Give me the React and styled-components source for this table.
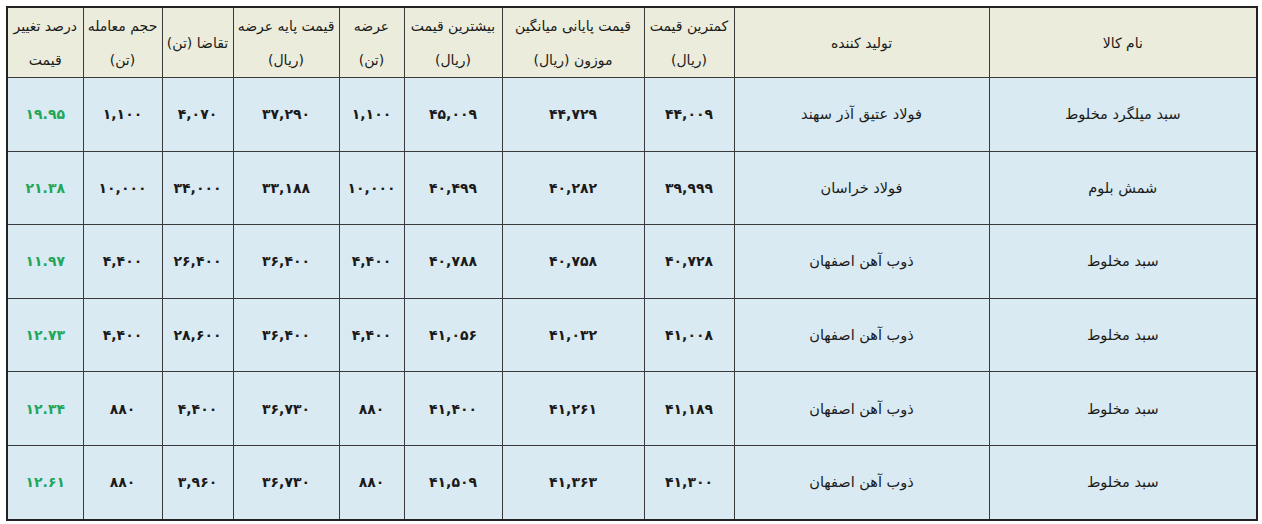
import styled, { createGlobalStyle } from 'styled-components';

const GlobalStyle = createGlobalStyle`
  html, body {
    margin: 0;
    padding: 0;
    background: #ffffff;
  }
  body {
    font-family: "DejaVu Sans", "Noto Sans", sans-serif;
    color: #1a1a1a;
  }
`;

const Page = styled.div`
  padding: 6px 6px 0 6px;
`;

const Table = styled.table`
  width: 1250px;
  border-collapse: collapse;
  table-layout: fixed;
  border: 2px solid #222;
`;

const HeadCell = styled.th`
  background: #ebecdb;
  border: 1px solid #3a3a3a;
  height: 69px;
  padding: 0 2px;
  font-weight: normal;
  font-size: 14px;
  line-height: 34px;
  text-align: center;
  vertical-align: middle;
  white-space: nowrap;
`;

const Cell = styled.td`
  background: #daeaf2;
  border: 1px solid #3a3a3a;
  height: 72.6px;
  padding: 0;
  text-align: center;
  vertical-align: middle;
  font-size: ${(p) => (p.$num ? '14px' : '14.5px')};
  font-weight: ${(p) => (p.$num ? 'bold' : 'normal')};
  color: ${(p) => (p.$green ? '#22a65c' : '#1a1a1a')};
  white-space: nowrap;
`;

const Num = styled.span`
  direction: ltr;
  unicode-bidi: isolate;
`;

// widths from right to left (table is rtl)
const widths = [268, 255, 90, 142, 98, 65, 106, 71, 79, 76];

const headers = [
  ['نام کالا'],
  ['تولید کننده'],
  ['کمترین قیمت', '(ریال)'],
  ['قیمت پایانی میانگین', 'موزون (ریال)'],
  ['بیشترین قیمت', '(ریال)'],
  ['عرضه', '(تن)'],
  ['قیمت پایه عرضه', '(ریال)'],
  ['تقاضا (تن)'],
  ['حجم معامله', '(تن)'],
  ['درصد تغییر', 'قیمت'],
];

const rows = [
  ['سبد میلگرد مخلوط', 'فولاد عتیق آذر سهند', '۴۴,۰۰۹', '۴۴,۷۲۹', '۴۵,۰۰۹', '۱,۱۰۰', '۳۷,۲۹۰', '۴,۰۷۰', '۱,۱۰۰', '۱۹.۹۵'],
  ['شمش بلوم', 'فولاد خراسان', '۳۹,۹۹۹', '۴۰,۲۸۲', '۴۰,۴۹۹', '۱۰,۰۰۰', '۳۳,۱۸۸', '۳۴,۰۰۰', '۱۰,۰۰۰', '۲۱.۳۸'],
  ['سبد مخلوط', 'ذوب آهن اصفهان', '۴۰,۷۲۸', '۴۰,۷۵۸', '۴۰,۷۸۸', '۴,۴۰۰', '۳۶,۴۰۰', '۲۶,۴۰۰', '۴,۴۰۰', '۱۱.۹۷'],
  ['سبد مخلوط', 'ذوب آهن اصفهان', '۴۱,۰۰۸', '۴۱,۰۳۲', '۴۱,۰۵۶', '۴,۴۰۰', '۳۶,۴۰۰', '۲۸,۶۰۰', '۴,۴۰۰', '۱۲.۷۳'],
  ['سبد مخلوط', 'ذوب آهن اصفهان', '۴۱,۱۸۹', '۴۱,۲۶۱', '۴۱,۴۰۰', '۸۸۰', '۳۶,۷۳۰', '۴,۴۰۰', '۸۸۰', '۱۲.۳۴'],
  ['سبد مخلوط', 'ذوب آهن اصفهان', '۴۱,۳۰۰', '۴۱,۳۶۳', '۴۱,۵۰۹', '۸۸۰', '۳۶,۷۳۰', '۳,۹۶۰', '۸۸۰', '۱۲.۶۱'],
];

export default function App() {
  return (
    <>
      <GlobalStyle />
      <Page>
        <Table dir="rtl">
          <colgroup>
            {widths.map((w, i) => (
              <col key={i} style={{ width: w }} />
            ))}
          </colgroup>
          <thead>
            <tr>
              {headers.map((h, i) => (
                <HeadCell key={i}>
                  {h.map((line, j) => (
                    <div key={j}>{line}</div>
                  ))}
                </HeadCell>
              ))}
            </tr>
          </thead>
          <tbody>
            {rows.map((r, i) => (
              <tr key={i}>
                {r.map((v, j) => (
                  <Cell key={j} $num={j > 1} $green={j === 9}>
                    {j > 1 ? <Num>{v}</Num> : v}
                  </Cell>
                ))}
              </tr>
            ))}
          </tbody>
        </Table>
      </Page>
    </>
  );
}
